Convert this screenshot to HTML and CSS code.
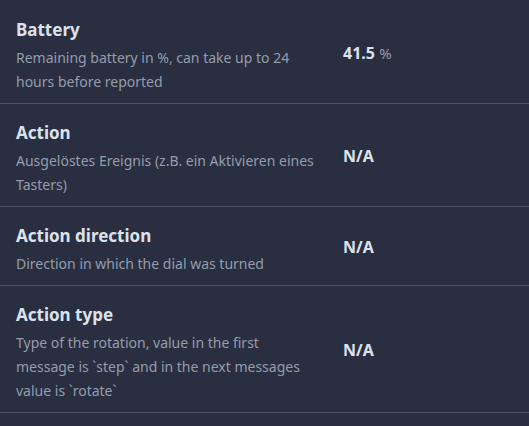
FILE: index.html
```html
<!DOCTYPE html>
<html lang="en">
<head>
<meta charset="utf-8">
<link rel="stylesheet" href="styles.css">
</head>
<body>
<div class="list">
  <div class="row">
    <div class="info">
      <div class="title">Battery</div>
      <div class="desc">Remaining battery in %, can take up to 24 hours before reported</div>
    </div>
    <div class="value"><span class="num">41.5</span> <span class="unit">%</span></div>
  </div>
  <div class="row">
    <div class="info">
      <div class="title">Action</div>
      <div class="desc">Ausgelöstes Ereignis (z.B. ein Aktivieren eines Tasters)</div>
    </div>
    <div class="value"><span class="num">N/A</span></div>
  </div>
  <div class="row">
    <div class="info">
      <div class="title">Action direction</div>
      <div class="desc">Direction in which the dial was turned</div>
    </div>
    <div class="value"><span class="num">N/A</span></div>
  </div>
  <div class="row">
    <div class="info">
      <div class="title">Action type</div>
      <div class="desc">Type of the rotation, value in the first message is `step` and in the next messages value is `rotate`</div>
    </div>
    <div class="value"><span class="num">N/A</span></div>
  </div>
</div>
</body>
</html>
```
FILE: styles.css
```css
html, body {
  margin: 0;
  padding: 0;
  background: #292f41;
  font-family: "Noto Sans", "Open Sans", sans-serif;
}
.list {
  display: flex;
  flex-direction: column;
  padding-top: 1px;
}
.row {
  display: flex;
  align-items: center;
  gap: 24px;
  padding: 15px 16px 9px 16px;
  border-bottom: 1px solid #4a5162;
}
.info {
  width: 303px;
  flex: none;
}
.title {
  font-size: 17px;
  font-weight: 700;
  line-height: 28px;
  color: #dde2ea;
}
.desc {
  margin-top: 2px;
  font-size: 14px;
  line-height: 24px;
  color: #959cab;
}
.value {
  font-size: 16px;
  color: #dde2ea;
  padding-bottom: 4px;
}
.num {
  font-weight: 700;
}
.unit {
  color: #959cab;
  font-size: 15px;
}
```
